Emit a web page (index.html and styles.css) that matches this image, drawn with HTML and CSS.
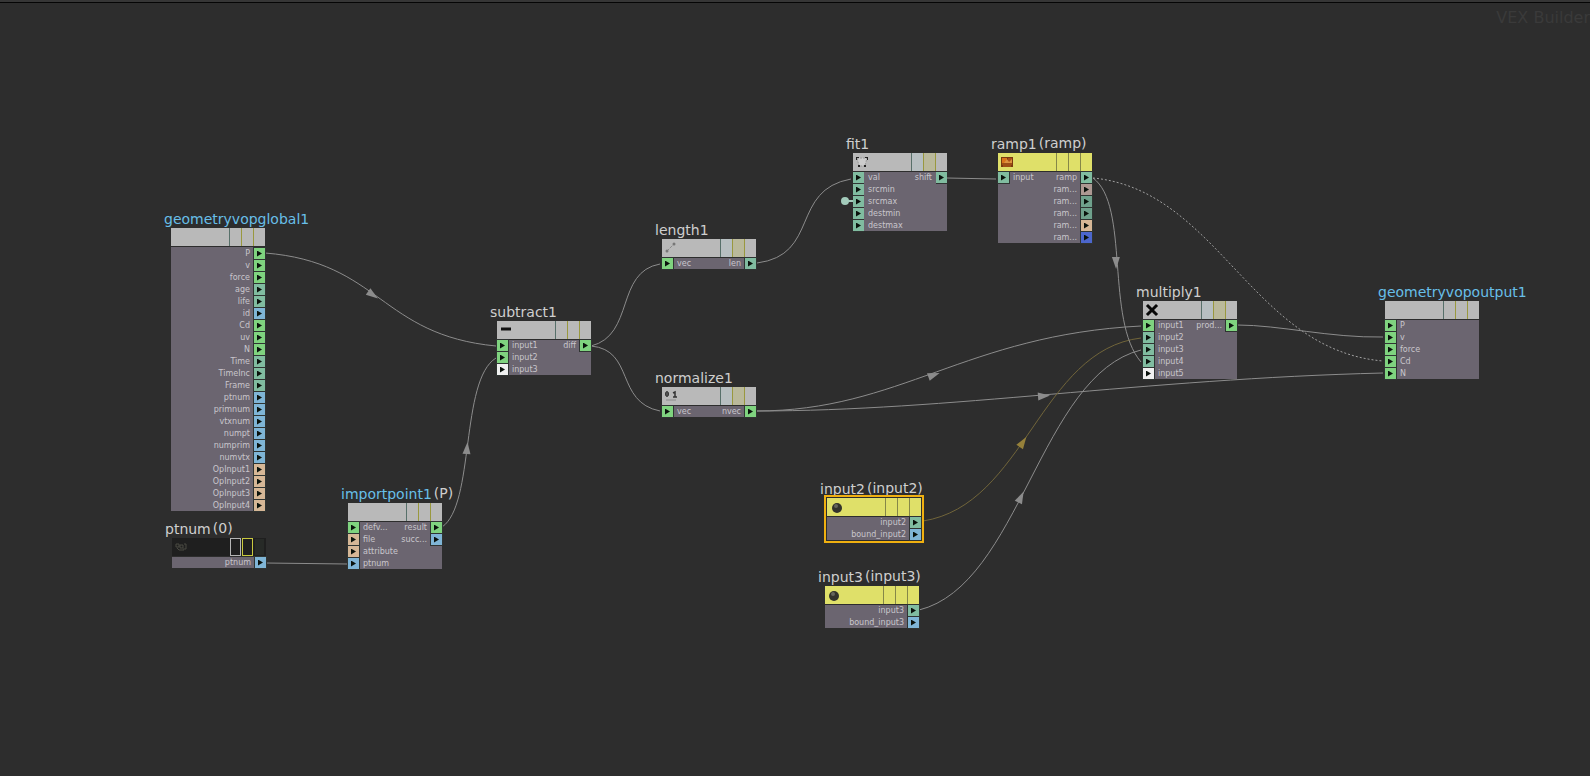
FILE: index.html
```html
<!DOCTYPE html>
<html lang="en">
<head>
<meta charset="utf-8">
<title>VEX Builder</title>
<link rel="stylesheet" href="styles.css">
</head>
<body>
<main class="network">
  <div class="context">VEX Builder</div>

  <svg class="wires" aria-hidden="true">
    <defs>
      <path id="arrow" d="M-6-4 6 0-6 4z"/>
    </defs>
    <path d="M265 253C380 262 380 335 496 346"/>
    <path d="M266 563 347 564"/>
    <path d="M442 527C475 505 460 380 496 358"/>
    <path d="M591 346C635 335 615 272 660 264"/>
    <path d="M591 346C635 350 615 402 660 411"/>
    <path d="M757 263C820 255 790 190 851 179"/>
    <path d="M947 178 996 179"/>
    <path d="M756 411C900 411 965 335 1141 326"/>
    <path d="M756 411C950 411 1140 379 1383 373"/>
    <path class="picked" d="M923 521C1025 505 1040 350 1141 338"/>
    <path d="M919 610C1020 585 1040 375 1141 350"/>
    <path d="M1093 178C1130 205 1105 320 1141 362"/>
    <path class="dotted" d="M1093 178C1218 190 1252 350 1383 361"/>
    <path d="M1237 325C1280 325 1330 338 1383 337"/>
    <path class="stem" d="M845 201H853"/>
    <circle cx="845" cy="201" r="4"/>
    <use href="#arrow" transform="translate(373 295) rotate(35)"/>
    <use href="#arrow" transform="translate(467 448) rotate(-85)"/>
    <use href="#arrow" transform="translate(934 375) rotate(-20)"/>
    <use href="#arrow" transform="translate(1044 396) rotate(-4)"/>
    <use href="#arrow" transform="translate(1116 263) rotate(89)"/>
    <use href="#arrow" transform="translate(1021 497) rotate(-64)"/>
    <use class="picked" href="#arrow" transform="translate(1023 442) rotate(-56)"/>
  </svg>

  <section class="node global">
    <h2 class="title blue">geometryvopglobal1</h2>
    <div class="head"><i></i><i></i><i></i></div>
    <div class="body">
      <ul class="outs">
        <li class="vec">P</li><li class="vec">v</li><li class="vec">force</li>
        <li class="flt">age</li><li class="flt">life</li><li class="int">id</li>
        <li class="vec">Cd</li><li class="vec">uv</li><li class="vec">N</li>
        <li class="flt">Time</li><li class="flt">TimeInc</li><li class="flt">Frame</li>
        <li class="int">ptnum</li><li class="int">primnum</li><li class="int">vtxnum</li>
        <li class="int">numpt</li><li class="int">numprim</li><li class="int">numvtx</li>
        <li class="str">OpInput1</li><li class="str">OpInput2</li><li class="str">OpInput3</li><li class="str">OpInput4</li>
      </ul>
    </div>
  </section>

  <section class="node param dark">
    <h2 class="title">ptnum<span>(0)</span></h2>
    <div class="head">
      <svg viewBox="0 0 14 14"><path d="M2 4h3v3H2zM6 5h3v3H6zM10 4h2v5H9M3 8l2 2h5" fill="none" stroke="#4a4a42"/></svg>
      <i></i><i></i><i></i>
    </div>
    <div class="body"><ul class="outs"><li class="int">ptnum</li></ul></div>
  </section>

  <section class="node import">
    <h2 class="title blue">importpoint1<span>(P)</span></h2>
    <div class="head"><i></i><i></i><i></i></div>
    <div class="body">
      <ul class="ins"><li class="vec">defv...</li><li class="str">file</li><li class="str">attribute</li><li class="int">ptnum</li></ul>
      <ul class="outs"><li class="vec">result</li><li class="int">succ...</li></ul>
    </div>
  </section>

  <section class="node subtract">
    <h2 class="title">subtract1</h2>
    <div class="head">
      <svg viewBox="0 0 14 14"><path d="M2 6h10" stroke="#111" stroke-width="3"/></svg>
      <i></i><i></i><i></i>
    </div>
    <div class="body">
      <ul class="ins"><li class="vec">input1</li><li class="vec">input2</li><li class="any">input3</li></ul>
      <ul class="outs"><li class="vec">diff</li></ul>
    </div>
  </section>

  <section class="node length tinted">
    <h2 class="title">length1</h2>
    <div class="head">
      <svg viewBox="0 0 14 14"><path d="M3 10l7-7" stroke="#8c8c8c" stroke-dasharray="3 1"/><circle cx="3" cy="10" r="1.5" fill="#777"/><circle cx="10" cy="3" r="1.5" fill="#777"/></svg>
      <i></i><i></i><i></i>
    </div>
    <div class="body">
      <ul class="ins"><li class="vec">vec</li></ul>
      <ul class="outs"><li class="flt">len</li></ul>
    </div>
  </section>

  <section class="node normalize tinted">
    <h2 class="title">normalize1</h2>
    <div class="head">
      <svg viewBox="0 0 14 14"><ellipse cx="3" cy="5" rx="1.5" ry="2.5" fill="#555" stroke="#333"/><path d="M9 4l2-1v5M9 8h4" fill="none" stroke="#333" stroke-width="1.5"/><path d="M2 11h10" stroke="#8c8c8c"/></svg>
      <i></i><i></i><i></i>
    </div>
    <div class="body">
      <ul class="ins"><li class="vec">vec</li></ul>
      <ul class="outs"><li class="vec">nvec</li></ul>
    </div>
  </section>

  <section class="node fit tinted">
    <h2 class="title">fit1</h2>
    <div class="head">
      <svg viewBox="0 0 14 14"><path d="M2 3h10l-2 8H4z" fill="#ccc" stroke="#999" stroke-dasharray="2 1"/><path d="M1 2h3v1H2v2H1zM10 2h3v3h-1V3h-2zM3 10h2v2H3zM9 10h2v2H9z" fill="#222"/></svg>
      <i></i><i></i><i></i>
    </div>
    <div class="body">
      <ul class="ins"><li class="flt">val</li><li class="flt">srcmin</li><li class="flt">srcmax</li><li class="flt">destmin</li><li class="flt">destmax</li></ul>
      <ul class="outs"><li class="flt">shift</li></ul>
    </div>
  </section>

  <section class="node ramp yellow">
    <h2 class="title">ramp1<span>(ramp)</span></h2>
    <div class="head">
      <svg viewBox="0 0 14 14"><path d="M1 2h12v10H1z" fill="#7a3a10"/><path d="M2 3h5v5H2z" fill="#d8741c"/><path d="M8 3h4v5H8z" fill="#a85018"/><path d="M4 8l3-4 2 3 3-3v4z" fill="#dc9440"/><path d="M2 9h10M3 11h8" stroke="#c0641c"/></svg>
      <i></i><i></i><i></i>
    </div>
    <div class="body">
      <ul class="ins"><li class="flt">input</li></ul>
      <ul class="outs"><li class="flt">ramp</li><li class="mute">ram...</li><li class="flt deep">ram...</li><li class="flt deep">ram...</li><li class="str">ram...</li><li class="royal">ram...</li></ul>
    </div>
  </section>

  <section class="node multiply tinted">
    <h2 class="title">multiply1</h2>
    <div class="head">
      <svg viewBox="0 0 14 14"><path d="M3 3l8 8M11 3l-8 8" stroke="#080808" stroke-width="3" stroke-linecap="square"/></svg>
      <i></i><i></i><i></i>
    </div>
    <div class="body">
      <ul class="ins"><li class="vec">input1</li><li class="flt">input2</li><li class="flt">input3</li><li class="flt">input4</li><li class="any">input5</li></ul>
      <ul class="outs"><li class="vec">prod...</li></ul>
    </div>
  </section>

  <section class="node output">
    <h2 class="title blue">geometryvopoutput1</h2>
    <div class="head"><i></i><i></i><i></i></div>
    <div class="body">
      <ul class="ins"><li class="vec">P</li><li class="vec">v</li><li class="vec">force</li><li class="vec">Cd</li><li class="vec">N</li></ul>
    </div>
  </section>

  <section class="node second yellow selected">
    <h2 class="title">input2<span>(input2)</span></h2>
    <div class="head">
      <svg viewBox="0 0 14 14"><circle cx="8" cy="8" r="5" fill="#33332c"/><circle cx="7" cy="6" r="2" fill="#66665c"/></svg>
      <i></i><i></i><i></i>
    </div>
    <div class="body"><ul class="outs"><li class="flt">input2</li><li class="int">bound_input2</li></ul></div>
  </section>

  <section class="node third yellow">
    <h2 class="title">input3<span>(input3)</span></h2>
    <div class="head">
      <svg viewBox="0 0 14 14"><circle cx="7" cy="8" r="5" fill="#33332c"/><circle cx="6" cy="6" r="2" fill="#66665c"/></svg>
      <i></i><i></i><i></i>
    </div>
    <div class="body"><ul class="outs"><li class="flt">input3</li><li class="int">bound_input3</li></ul></div>
  </section>
</main>
</body>
</html>
```

FILE: styles.css
```css
* { box-sizing: border-box; }

body {
  margin: 0;
  background: #2d2d2d;
  font-family: "DejaVu Sans", sans-serif;
}

.network {
  position: relative;
  min-height: 100vh;
  overflow: hidden;
  border-top: 2px solid #363636;
}

.network::before {
  content: "";
  display: block;
  height: 1px;
  background: #050505;
}

.context {
  padding-top: 5px;
  text-align: right;
  font-size: 16px;
  line-height: 20px;
  color: #3a3a3a;
}

/* Canvas coordinates start at the window's corner, above the border. */
.wires {
  position: absolute;
  left: 0;
  top: -2px;
  width: 100%;
  height: 100%;
  overflow: visible;
  fill: none;
  stroke: #8c8c8c;
}

.wires use { fill: #8c8c8c; stroke: none; }
.wires path.picked { stroke: #71653a; }
.wires use.picked { fill: #95803a; }
.wires .dotted { stroke: #a0a0a0; stroke-dasharray: 2 2; }
.wires .stem { stroke: #a3cbbb; stroke-width: 2; }
.wires circle { fill: #a3cbbb; stroke: none; }

.node { position: absolute; width: 94px; margin-top: -2px; }

.global { left: 171px; top: 228px; }
.param { left: 172px; top: 538px; }
.import { left: 348px; top: 503px; }
.subtract { left: 497px; top: 321px; }
.length { left: 662px; top: 239px; }
.normalize { left: 662px; top: 387px; }
.fit { left: 853px; top: 153px; }
.ramp { left: 998px; top: 153px; }
.multiply { left: 1143px; top: 301px; }
.output { left: 1385px; top: 301px; }
.second { left: 827px; top: 498px; }
.third { left: 825px; top: 586px; }

.title {
  position: absolute;
  left: -7px;
  bottom: 100%;
  display: flex;
  gap: 2px;
  margin: 0 0 1px;
  font-size: 14px;
  font-weight: 400;
  line-height: 16px;
  color: #cfcfcf;
  white-space: nowrap;
}
.title span { padding-bottom: 1px; margin-top: -1px; }
.blue { color: #68bfe8; }
.blue span { color: #cfcfcf; }

.head {
  display: flex;
  justify-content: flex-end;
  height: 18px;
  background: #b9b9b9;
}
.head svg { width: 14px; height: 14px; margin: 2px auto 0 2px; }
.head i { width: 12px; border-left: 1px solid #57706a; }
.head i + i { border-color: #99983e; }

.tinted .head i:first-of-type { background: #b7bfc1; }
.tinted .head i:nth-of-type(2) { background: #bab99b; }

.yellow .head { background: #dfe069; }
.yellow .head i { border-color: #858748; }

.dark .head { background: #1f1f1f; padding-right: 1px; gap: 1px; }
.dark .head i { width: 11px; border: 1px solid #1f1f1f; }
.dark .head i:first-of-type { border-color: #b5b5b5; }
.dark .head i:nth-of-type(2) { border-color: #c9c93f; }
.dark .head i:last-of-type { background: #272a27; }

.body {
  display: flex;
  justify-content: space-between;
  align-items: flex-start;
  border-top: 1px solid #2d2d2d;
  background: #6b6570;
}
.global .body { padding-top: 1px; }

.ins, .outs {
  display: grid;
  gap: 1px;
  margin: 0;
  padding: 0;
  list-style: none;
  font-size: 8px;
  line-height: 11px;
  color: #c9c6cc;
}
.outs { margin-left: auto; }

li { display: flex; align-items: center; height: 11px; }
.outs li { justify-content: flex-end; }

li::before {
  content: "";
  width: 11px;
  height: 11px;
  background: var(--type);
  box-shadow: 0 0 0 1px #2f3432;
}
.fit li::before { box-shadow: 0 1px #2f3432; }
li::after {
  content: "";
  width: 5px;
  height: 6px;
  margin-left: -8px;
  margin-right: 3px;
  background: #0a120c;
  clip-path: polygon(0 0, 100% 50%, 0 100%);
}

.ins li::before { order: -2; }
.ins li::after { order: -1; margin-right: 7px; }
.outs li::before { order: 1; margin-left: 4px; }
.outs li::after { order: 2; }

.vec { --type: #7fd37f; }
.flt { --type: #80bca0; }
.deep { --type: #6fa18c; }
.int { --type: #7fb5d6; }
.str { --type: #d6b796; }
.any { --type: #f0f0f0; }
.mute { --type: #ad9892; }
.royal { --type: #4c66cc; }

.selected::after {
  content: "";
  position: absolute;
  inset: -3px;
  border: 2px solid #f0b010;
}
```
